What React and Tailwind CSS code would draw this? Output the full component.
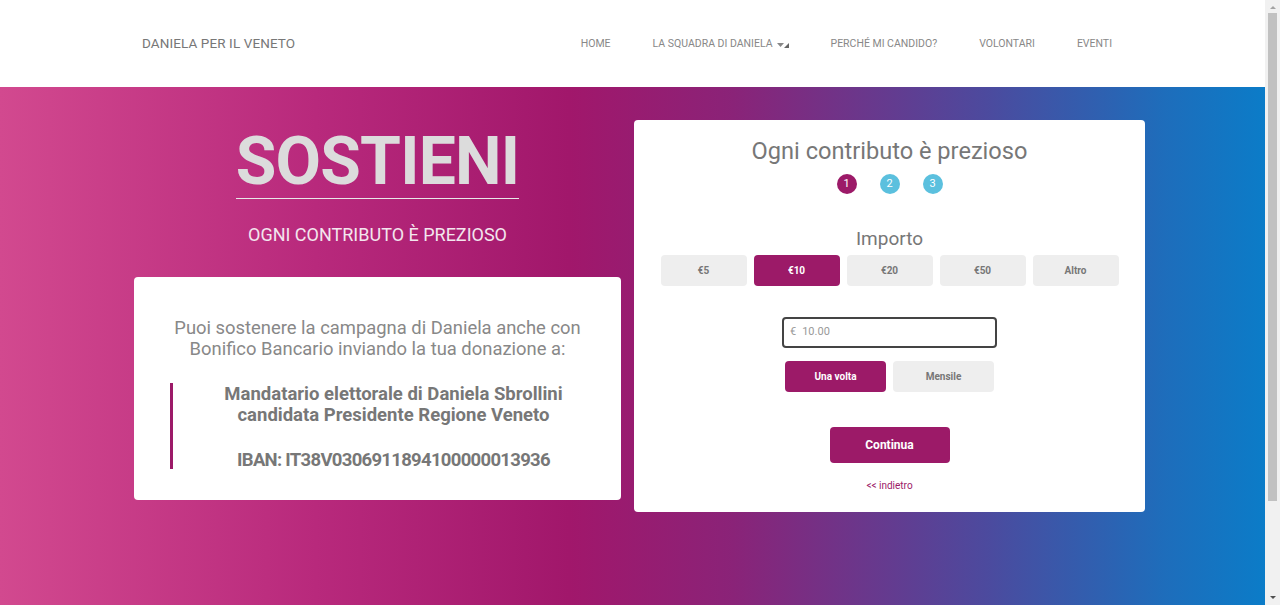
import React from "react";

const amounts = ["€5", "€10", "€20", "€50", "Altro"];
const navItems = ["HOME", "LA SQUADRA DI DANIELA", "PERCHÉ MI CANDIDO?", "VOLONTARI", "EVENTI"];

function Header() {
  return (
    <header className="h-[87px] bg-white flex items-center pl-[142px] pr-[132px]">
      <div className="text-[13.5px] text-[#777] tracking-[0.1px]">DANIELA PER IL VENETO</div>
      <nav className="ml-auto flex items-center text-[10.5px] text-[#888]">
        {navItems.map((item, i) => (
          <div key={i} className="px-[21px] flex items-center">
            {item}
            {i === 1 && (
              <span className="ml-[4px] flex items-end">
                <svg width="7" height="5" viewBox="0 0 7 5"><path d="M0 0h7L3.5 4z" fill="#888" /></svg>
                <svg width="5" height="5" viewBox="0 0 5 5" className="mt-[4px]"><path d="M5 0v5H0z" fill="#666" /></svg>
              </span>
            )}
          </div>
        ))}
      </nav>
    </header>
  );
}

function Steps() {
  return (
    <div className="flex justify-center gap-[23px] mt-[8px]">
      {[1, 2, 3].map((n) => (
        <div
          key={n}
          className={`w-[20px] h-[20px] rounded-full flex items-center justify-center text-[11px] text-white ${
            n === 1 ? "bg-[#9c1a68]" : "bg-[#5bc0de]"
          }`}
        >
          {n}
        </div>
      ))}
    </div>
  );
}

function DonationCard() {
  return (
    <div className="w-[511px] h-[392px] bg-white rounded-[4px] flex flex-col items-center pt-[16px]">
      <h2 className="text-[23.6px] text-[#777] leading-[30px]">Ogni contributo è prezioso</h2>
      <Steps />
      <div className="text-[19px] text-[#777] mt-[33px] leading-[24px]">Importo</div>
      <div className="flex gap-[7px] mt-[4px]">
        {amounts.map((a) => (
          <button
            key={a}
            className={`w-[86px] h-[31px] rounded-[4px] text-[10px] font-bold ${
              a === "€10" ? "bg-[#9c1a68] text-white" : "bg-[#eeeeee] text-[#777]"
            }`}
          >
            {a}
          </button>
        ))}
      </div>
      <div className="mt-[31px] w-[215px] h-[31px] border-2 border-[#444] rounded-[4px] flex items-center pl-[6px] text-[11px] text-[#999] gap-[6px]">
        <span>€</span>
        <span>10.00</span>
      </div>
      <div className="flex gap-[7px] mt-[13px]">
        <button className="w-[101px] h-[31px] rounded-[4px] bg-[#9c1a68] text-white text-[10px] font-bold">Una volta</button>
        <button className="w-[101px] h-[31px] rounded-[4px] bg-[#eeeeee] text-[#777] text-[10px] font-bold">Mensile</button>
      </div>
      <button className="mt-[35px] w-[120px] h-[36px] rounded-[4px] bg-[#9c1a68] text-white text-[12px] font-bold">Continua</button>
      <a className="mt-[15px] text-[10px] text-[#9c1a68]">&lt;&lt; indietro</a>
    </div>
  );
}

function InfoCard() {
  return (
    <div className="w-[487px] h-[223px] bg-white rounded-[4px] pt-[40px]">
      <p className="text-[18.4px] leading-[21px] text-[#888] text-center">
        Puoi sostenere la campagna di Daniela anche con
        <br />
        Bonifico Bancario inviando la tua donazione a:
      </p>
      <div className="mt-[24px] ml-[36px] mr-[7px] border-l-[3px] border-[#9c1a68] h-[86px] pt-[1px] flex flex-col items-center text-[18.5px] leading-[21px] font-bold text-[#777] text-center">
        <div>Mandatario elettorale di Daniela Sbrollini</div>
        <div>candidata Presidente Regione Veneto</div>
        <div className="mt-[24px] tracking-[-0.7px]">IBAN: IT38V0306911894100000013936</div>
      </div>
    </div>
  );
}

export default function App() {
  return (
    <div className="flex w-[1280px] h-[605px] overflow-hidden" style={{ fontFamily: "Roboto, 'Liberation Sans', sans-serif" }}>
      <div className="flex-1 flex flex-col">
        <Header />
        <section className="flex-1 bg-[linear-gradient(90deg,#d2498f_0%,#b8297c_25%,#a1176b_45%,#8a2378_58%,#4c4a9e_78%,#1e6dbb_92%,#0b7cc8_100%)] pl-[134px] pt-[33px] flex gap-[13px]">
          <div className="w-[487px] flex flex-col">
            <div className="flex flex-col items-center pt-[8px]">
              <h1 className="text-[66px] leading-[68px] font-bold text-[#dcdcdc] tracking-[-0.8px] border-b border-[#e8e8e8] pb-[2px]">SOSTIENI</h1>
              <div className="mt-[25px] text-[18px] text-[#f3e6ee] leading-[21px]">OGNI CONTRIBUTO È PREZIOSO</div>
            </div>
            <div className="mt-[32px]">
              <InfoCard />
            </div>
          </div>
          <DonationCard />
        </section>
      </div>
      <div className="w-[15px] bg-[#f1f1f1] flex flex-col items-center">
        <svg width="8" height="12" viewBox="0 0 8 12" className="mt-[1px]"><path d="M1 8h6L4 5z" fill="#a3a3a3" /></svg>
        <div className="w-[9px] h-[488px] bg-[#c1c1c1]" />
        <div className="flex-1" />
        <svg width="8" height="12" viewBox="0 0 8 12" className="mb-[1px]"><path d="M1 4h6L4 7z" fill="#505050" /></svg>
      </div>
    </div>
  );
}
